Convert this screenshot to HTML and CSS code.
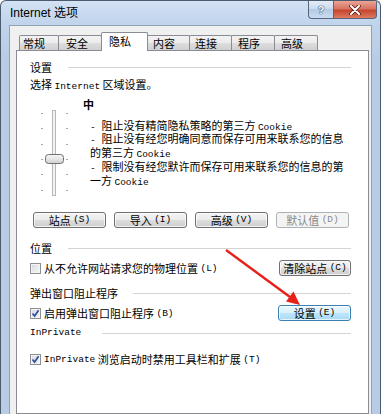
FILE: index.html
```html
<!DOCTYPE html>
<html lang="zh-CN">
<head>
<meta charset="utf-8">
<title>Internet 选项</title>
<link rel="stylesheet" href="styles.css">
</head>
<body>
<div class="window">
  <div class="titlebar">
    <span class="title">Internet 选项</span>
    <div class="caption">
      <span class="cbtn help">?</span>
      <span class="cbtn close"><svg width="12" height="10" viewBox="0 0 12 10"><path d="M2 1 L10 9 M10 1 L2 9" stroke="#5a1a12" stroke-width="3.6" stroke-linecap="round"/><path d="M2 1 L10 9 M10 1 L2 9" stroke="#fff" stroke-width="2" stroke-linecap="round"/></svg></span>
    </div>
  </div>
  <div class="client">
    <div class="tabs">
      <div class="tab t1">常规</div>
      <div class="tab t2">安全</div>
      <div class="tab t3 active">隐私</div>
      <div class="tab t4">内容</div>
      <div class="tab t5">连接</div>
      <div class="tab t6">程序</div>
      <div class="tab t7">高级</div>
    </div>
    <div class="panel">
      <div class="hdr">设置</div>
      <div class="desc">选择 <span class="m">Internet</span> 区域设置。</div>
      <div class="level">中</div>
      <div class="slider-row">
        <svg class="slider" width="60" height="86" viewBox="0 0 60 86">
          <defs>
            <linearGradient id="thumb" x1="0" y1="0" x2="0" y2="1">
              <stop offset="0" stop-color="#f7f7f7"/>
              <stop offset="0.5" stop-color="#e6e6e6"/>
              <stop offset="1" stop-color="#cfcfcf"/>
            </linearGradient>
          </defs>
          <rect x="22.5" y="0.5" width="3" height="85" fill="#f2f2f2" stroke="#b8b8b8"/>
          <g fill="#a8a8a8">
            <rect x="11" y="3" width="2" height="1"/><rect x="36" y="3" width="2" height="1"/>
            <rect x="11" y="18" width="2" height="1"/><rect x="36" y="18" width="2" height="1"/>
            <rect x="11" y="34" width="2" height="1"/><rect x="36" y="34" width="2" height="1"/>
            <rect x="11" y="49" width="2" height="1"/><rect x="36" y="49" width="2" height="1"/>
            <rect x="11" y="64" width="2" height="1"/><rect x="36" y="64" width="2" height="1"/>
            <rect x="11" y="80" width="2" height="1"/><rect x="36" y="80" width="2" height="1"/>
          </g>
          <rect x="15.5" y="44.5" width="18" height="9" rx="3" fill="url(#thumb)" stroke="#6f6f6f"/>
        </svg>
        <div class="bullets">
          <div><span class="m">- </span>阻止没有精简隐私策略的第三方 <span class="m">Cookie</span></div>
          <div><span class="m">- </span>阻止没有经您明确同意而保存可用来联系您的信息<br>的第三方 <span class="m">Cookie</span></div>
          <div><span class="m">- </span>限制没有经您默许而保存可用来联系您的信息的第<br>一方 <span class="m">Cookie</span></div>
        </div>
      </div>
      <div class="btnrow">
        <span class="btn">站点 <span class="m">(S)</span></span>
        <span class="btn">导入 <span class="m">(I)</span></span>
        <span class="btn">高级 <span class="m">(V)</span></span>
        <span class="btn disabled">默认值 <span class="m">(D)</span></span>
      </div>
      <div class="hdr hdr-loc">位置</div>
      <div class="optrow r1">
        <span class="opt"><span class="cb"></span>从不允许网站请求您的物理位置 <span class="m">(L)</span></span>
        <span class="btn wide">清除站点 <span class="m">(C)</span></span>
      </div>
      <div class="hdr hdr-pop">弹出窗口阻止程序</div>
      <div class="optrow r2">
        <span class="opt"><span class="cb checked"><svg width="9" height="9" viewBox="0 0 9 9"><path d="M1.5 4.5 L3.6 7 L7.6 1.2" fill="none" stroke="#2f4fa0" stroke-width="1.7"/></svg></span>启用弹出窗口阻止程序 <span class="m">(B)</span></span>
        <span class="btn wide focus">设置 <span class="m">(E)</span></span>
      </div>
      <div class="hdr hdr-inp"><span class="m">InPrivate</span></div>
      <div class="optrow r3">
        <span class="opt"><span class="cb checked"><svg width="9" height="9" viewBox="0 0 9 9"><path d="M1.5 4.5 L3.6 7 L7.6 1.2" fill="none" stroke="#2f4fa0" stroke-width="1.7"/></svg></span><span class="m">InPrivate</span>&nbsp;浏览启动时禁用工具栏和扩展 <span class="m">(T)</span></span>
      </div>
    </div>
  </div>
</div>
<svg class="arrow" width="386" height="414" viewBox="0 0 386 414">
  <line x1="226" y1="250" x2="290" y2="297" stroke="#e8201a" stroke-width="2.4"/>
  <polygon points="300,305 286,301.5 293.5,291.5" fill="#e8201a"/>
</svg>
</body>
</html>
```
FILE: styles.css
```css
html, body {
  margin: 0;
  padding: 0;
  background: #ffffff;
  overflow: hidden;
}
body {
  position: relative;
  width: 386px;
  height: 414px;
  font-family: "Noto Sans CJK SC", "Liberation Sans", sans-serif;
  font-size: 11px;
  color: #000;
}
.window {
  box-sizing: border-box;
  width: 381px;
  height: 414px;
  border: 1px solid #4b5b6d;
  border-bottom: none;
  border-radius: 6px 6px 0 0;
  background: linear-gradient(#d3e2f4, #bfd3eb 24px, #b8cce6 60px, #b8cce6);
  display: flex;
  flex-direction: column;
  overflow: hidden;
}
.titlebar {
  height: 24px;
  flex: none;
  display: flex;
  justify-content: space-between;
  align-items: flex-start;
  padding-left: 9px;
}
.title {
  font-family: "Liberation Sans", "Noto Sans CJK SC", sans-serif;
  font-size: 12px;
  line-height: 14px;
  padding-top: 5px;
  color: #000;
}
.caption {
  display: flex;
  margin-right: 3px;
}
.cbtn {
  box-sizing: border-box;
  height: 18px;
  display: flex;
  align-items: center;
  justify-content: center;
  border: 1px solid #56657a;
  border-top: none;
}
.help {
  width: 26px;
  border-radius: 0 0 0 4px;
  background: linear-gradient(#e4edf8, #c9d9ee 50%, #b5c9e3 50%, #c9dcf2);
  font-family: "Liberation Sans", sans-serif;
  font-weight: bold;
  font-size: 11px;
  color: #fff;
  text-shadow: 0 0 1px #34465c, 0 0 1px #34465c, 0 0 1px #34465c;
}
.close {
  width: 43px;
  border-left: none;
  border-radius: 0 0 4px 0;
  background: linear-gradient(#eaa597, #d87463 45%, #c7452f 55%, #dc7b60);
}
.client {
  flex: 1;
  margin: 0 8px;
  background: #f0f0f0;
  border: 1px solid #8ea2b9;
  border-bottom: none;
  padding: 0 2px 0 6px;
  display: flex;
  flex-direction: column;
}
.tabs {
  height: 24px;
  flex: none;
  display: flex;
  align-items: flex-end;
  padding-left: 3px;
}
.tab {
  box-sizing: border-box;
  height: 15px;
  border: 1px solid #898c95;
  border-bottom: none;
  border-radius: 2px 2px 0 0;
  background: linear-gradient(#f3f3f3, #ebebeb 50%, #dedede 50%, #d0d0d0);
  margin-left: -1px;
  padding-left: 5px;
  font-size: 11px;
  line-height: 14px;
  white-space: nowrap;
}
.t1 { width: 40px; margin-left: 0; padding-left: 3px; }
.t2 { width: 44px; padding-left: 7px; }
.t3 { width: 47px; padding-left: 7px; }
.t4 { width: 43px; padding-left: 5px; }
.t5 { width: 43px; padding-left: 5px; }
.t6 { width: 44px; padding-left: 6px; }
.t7 { width: 44px; padding-left: 6px; }
.tab.active {
  height: 19px;
  background: #ffffff;
  margin-bottom: -1px;
  position: relative;
  z-index: 1;
  line-height: 17px;
}
.panel {
  flex: 1;
  background: #ffffff;
  border: 1px solid #898c95;
  padding: 9px 17px 0 13px;
}
.m {
  font-family: "Liberation Mono", monospace;
  font-size: 9.5px;
}
.hdr {
  display: flex;
  align-items: center;
  gap: 16px;
  height: 14px;
  line-height: 14px;
  white-space: nowrap;
}
.hdr::after {
  content: "";
  flex: 1;
  height: 1px;
  background: #d4d4d4;
}
.hdr-loc { margin-top: 13px; }
.hdr-pop { margin-top: 10px; gap: 15px; }
.hdr-inp { margin-top: 5px; gap: 21px; }
.desc {
  margin-top: 3px;
  line-height: 14px;
}
.level {
  margin-top: 4px;
  line-height: 12px;
  padding-left: 53px;
  font-weight: bold;
}
.slider-row {
  display: flex;
  height: 86px;
}
.slider {
  flex: none;
  display: block;
}
.bullets {
  padding-top: 9.5px;
  line-height: 10.75px;
  white-space: nowrap;
}
.btnrow {
  margin-top: 16px;
  display: flex;
  gap: 8px;
  padding-left: 3px;
}
.btn {
  box-sizing: border-box;
  width: 73px;
  height: 16px;
  border: 1px solid #707070;
  border-radius: 3px;
  background: linear-gradient(#f3f3f3, #ebebeb 48%, #dddddd 52%, #cfcfcf);
  box-shadow: inset 0 0 0 1px rgba(255, 255, 255, 0.7);
  display: flex;
  align-items: center;
  justify-content: center;
  line-height: 14px;
  white-space: pre;
}
.btn.disabled {
  border-color: #adb2b5;
  background: #f4f4f4;
  color: #8a8a8a;
  box-shadow: none;
}
.btn.wide { width: 72px; }
.btn.focus {
  width: 73px;
  border-color: #3c7fb1;
  background: linear-gradient(#eaf6fd, #d9f0fc 48%, #bee6fd 52%, #a7d9f5);
}
.optrow {
  display: flex;
  align-items: center;
  justify-content: space-between;
  height: 16px;
  margin-top: 5px;
}
.r3 { margin-top: 11px; }
.opt {
  display: flex;
  align-items: center;
  white-space: pre;
}
.cb {
  box-sizing: border-box;
  width: 11px;
  height: 11px;
  border: 1px solid #8e8f8f;
  background: linear-gradient(135deg, #d6d9de, #f7f7f7);
  box-shadow: inset 0 0 0 1px #f4f4f4;
  margin-right: 3px;
  display: flex;
  align-items: center;
  justify-content: center;
  flex: none;
}
.cb svg { display: block; }
.arrow {
  position: absolute;
  top: 0;
  left: 0;
  pointer-events: none;
}
```
